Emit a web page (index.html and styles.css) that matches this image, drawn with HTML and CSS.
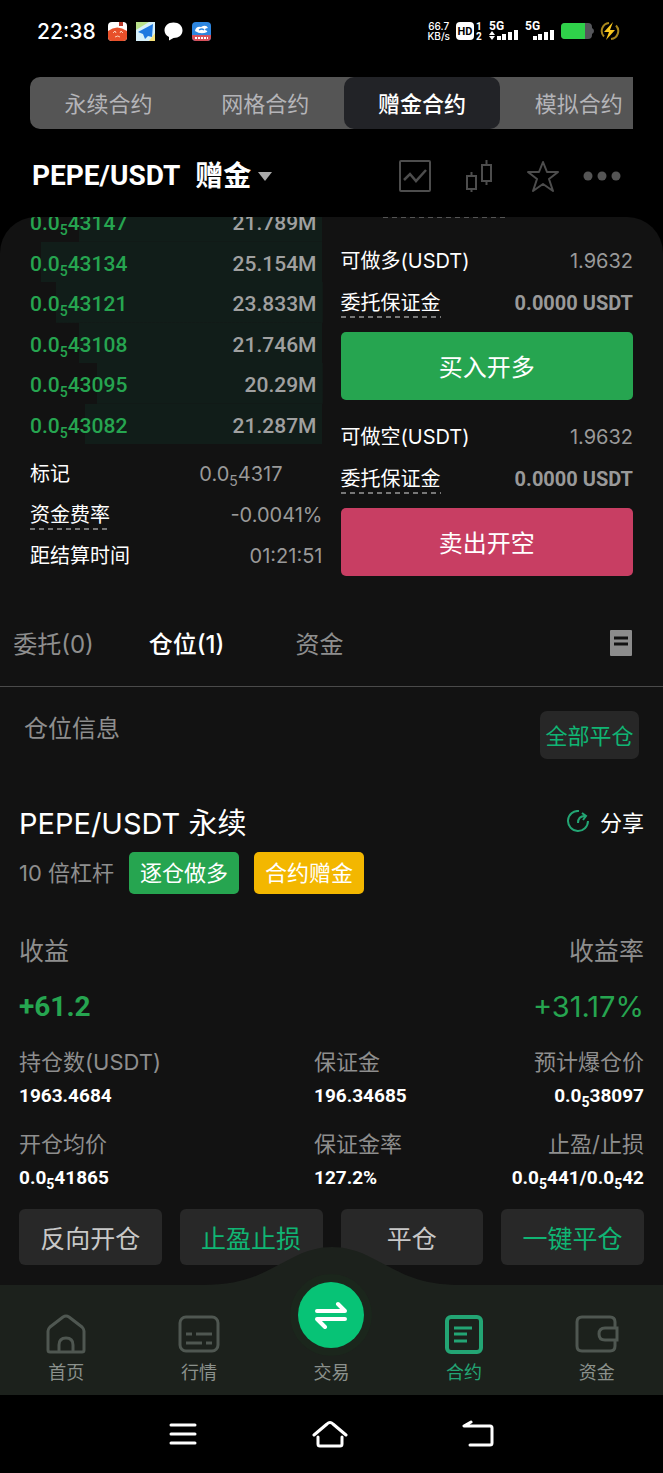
FILE: index.html
```html
<!DOCTYPE html>
<html lang="zh-CN">
<head>
    <meta charset="UTF-8">
    <meta name="viewport" content="width=device-width, initial-scale=1.0">
    <title>PEPE/USDT 赠金合约</title>
    <link rel="stylesheet" href="styles.css">
</head>
<body>
    <div class="status-bar">
        <span class="clock">22:38</span>
        <div class="notifications">
            <svg width="19" height="19" viewBox="0 0 19 19">
                <rect width="19" height="19" rx="4" fill="#fff"/>
                <path d="M0 9Q9 2 19 9V15Q19 19 15 19H4Q0 19 0 15Z" fill="#e8502a"/>
                <path d="M11 0h4v4h-4z" fill="#b8392a"/>
                <path d="M5 11l2-2 1 2M12 11l1-2 2 2M7 15q3-2 5 0" stroke="#fbd0b8" stroke-width="1" fill="none"/>
            </svg>
            <svg width="19" height="19" viewBox="0 0 19 19">
                <rect width="19" height="19" fill="#d6f0fa"/>
                <path d="M0 0h13L0 8z" fill="#b9e08a"/>
                <path d="M13 19h6v-8z" fill="#f6e27a"/>
                <path d="M17 2L2 10l5 2 2 5 3-3 4 1z" fill="#1e78e0"/>
            </svg>
            <svg width="19" height="19" viewBox="0 0 19 19">
                <path d="M9.500 0.500C15 0.500 18.500 4 18.500 8.500S15 16 9.500 16L5 18.500V15C2 13.500 0.500 11 0.500 8.500 0.500 4 4 0.500 9.500 0.500Z" fill="#fff"/>
            </svg>
            <svg width="19" height="19" viewBox="0 0 19 19">
                <rect width="19" height="19" rx="4" fill="#2d86e0"/>
                <path d="M0 13h19v2q0 4-4 4H4q-4 0-4-4z" fill="#d8505a"/>
                <path d="M3 9Q4 4 9 5q5-3 7 1-3 0-3 2 3 1 2 2-6 3-12-1z" fill="#fff"/>
                <path d="M7 8q3-2 5 0" stroke="#2d86e0" stroke-width="1.500" fill="none"/>
                <path d="M3 16h13" stroke="#fff" stroke-width="2" stroke-dasharray="2 1"/>
            </svg>
        </div>
        <div class="signals">
            <span class="speed">66.7<br>KB/s</span>
            <svg width="27" height="20" viewBox="0 0 27 20">
                <rect y="1" width="18" height="18" rx="4" fill="#fff"/>
                <text x="9" y="14" class="hd" text-anchor="middle">HD</text>
                <text x="20" y="9" class="sim">1</text>
                <text x="20" y="19" class="sim">2</text>
            </svg>
            <svg width="30" height="20" viewBox="0 0 30 20">
                <text x="0" y="9" class="net">5G</text>
                <path d="M3 10l3 4H0zM0 15h6l-3 4z" fill="#fff"/>
                <path d="M8 15h4v4H8zM13 13h4v6h-4zM19 11h4v8h-4zM25 9h4v10h-4z" fill="#fff"/>
            </svg>
            <svg width="30" height="20" viewBox="0 0 30 20">
                <text x="0" y="9" class="net">5G</text>
                <path d="M8 15h4v4H8zM13 13h4v6h-4zM19 11h4v8h-4zM25 9h4v10h-4z" fill="#fff"/>
            </svg>
            <svg width="33" height="18" viewBox="0 0 33 18">
                <path d="M4 1H27Q31 1 31 5V6Q33 7 33 9T31 12V13Q31 17 27 17H4Q0 17 0 13V5Q0 1 4 1Z" fill="#55565a"/>
                <path d="M4 1H24V17H4Q0 17 0 13V5Q0 1 4 1Z" fill="#2fd14a"/>
            </svg>
            <svg width="20" height="20" viewBox="0 0 20 20">
                <path d="M9 2A8 8 0 0 0 4 15.500M11 18A8 8 0 0 0 16 4.500" stroke="#a8871c" stroke-width="2" fill="none"/>
                <path d="M13 1L4 11h5l-3 8 9-10h-5z" fill="#fbc91f"/>
            </svg>
        </div>
    </div>

    <nav class="segment">
        <button class="segment-item">永续合约</button>
        <button class="segment-item">网格合约</button>
        <button class="segment-item active">赠金合约</button>
        <button class="segment-item">模拟合约</button>
    </nav>

    <header class="pair-bar">
        <button class="pair"><span class="pair-name">PEPE/USDT</span>赠金<i class="caret"></i></button>
        <div class="pair-tools">
            <button aria-label="图表">
                <svg width="32" height="32" viewBox="0 0 32 32" fill="none" stroke="#4d4d4d" stroke-width="2">
                    <rect x="1" y="1" width="30" height="30" rx="1"/>
                    <path d="M5 20l6-6 6 7L27 10" stroke-width="2.500"/>
                </svg>
            </button>
            <button aria-label="K线">
                <svg width="28" height="34" viewBox="0 0 28 34" fill="none" stroke="#4d4d4d" stroke-width="2">
                    <path d="M2 17h9v13H2zM17 6h9v16h-9zM6.500 13v4M6.500 30v3M21.500 1v5M21.500 22v4"/>
                </svg>
            </button>
            <button aria-label="收藏">
                <svg width="32" height="32" viewBox="0 0 32 32" fill="none" stroke="#4d4d4d" stroke-width="2" stroke-linejoin="round">
                    <path d="M16 2l4 10h11l-9 7 4 12-10-7-10 7 4-12-9-7h11z"/>
                </svg>
            </button>
            <button aria-label="更多">
                <svg width="38" height="10" viewBox="0 0 38 10" fill="#555">
                    <circle cx="5" cy="5" r="4.500"/><circle cx="19" cy="5" r="4.500"/><circle cx="33" cy="5" r="4.500"/>
                </svg>
            </button>
        </div>
    </header>

    <main class="panel">
        <section class="trade">
            <div class="book">
                <div class="book-rows">
                    <div class="book-row" style="--depth: 83%"><span class="price">0.0<sub>5</sub>43147</span><span>21.789M</span></div>
                    <div class="book-row" style="--depth: 96%"><span class="price">0.0<sub>5</sub>43134</span><span>25.154M</span></div>
                    <div class="book-row" style="--depth: 91%"><span class="price">0.0<sub>5</sub>43121</span><span>23.833M</span></div>
                    <div class="book-row" style="--depth: 83%"><span class="price">0.0<sub>5</sub>43108</span><span>21.746M</span></div>
                    <div class="book-row" style="--depth: 77%"><span class="price">0.0<sub>5</sub>43095</span><span>20.29M</span></div>
                    <div class="book-row" style="--depth: 81%"><span class="price">0.0<sub>5</sub>43082</span><span>21.287M</span></div>
                </div>
                <div class="market">
                    <div class="market-row mark"><span class="label">标记</span><span>0.0<sub>5</sub>4317</span></div>
                    <div class="market-row"><span class="label dashed">资金费率</span><span>-0.0041%</span></div>
                    <div class="market-row"><span class="label">距结算时间</span><span>01:21:51</span></div>
                </div>
            </div>
            <div class="order">
                <div class="order-row"><span class="label">可做多(USDT)</span><span>1.9632</span></div>
                <div class="order-row"><span class="label dashed">委托保证金</span><b>0.0000 USDT</b></div>
                <button class="order-btn buy">买入开多</button>
                <div class="order-row"><span class="label">可做空(USDT)</span><span>1.9632</span></div>
                <div class="order-row"><span class="label dashed">委托保证金</span><b>0.0000 USDT</b></div>
                <button class="order-btn sell">卖出开空</button>
            </div>
        </section>

        <nav class="tabs">
            <button class="tab">委托(0)</button>
            <button class="tab active">仓位(1)</button>
            <button class="tab">资金</button>
            <button class="history" aria-label="历史记录">
                <svg width="22" height="26" viewBox="0 0 22 26">
                    <rect width="22" height="26" rx="1" fill="#8c8c8c"/>
                    <path d="M4 8h14M4 14h14" stroke="#121212" stroke-width="3"/>
                </svg>
            </button>
        </nav>

        <div class="position-bar">
            <h2>仓位信息</h2>
            <button class="close-all">全部平仓</button>
        </div>

        <article class="position">
            <div class="position-head">
                <h3>PEPE/USDT 永续</h3>
                <button class="share">
                    <svg width="22" height="22" viewBox="0 0 22 22" fill="none" stroke="#23a574" stroke-width="2">
                        <path d="M12 1A10 10 0 1 0 21 11"/>
                        <path d="M11 13Q11 6 18 6M15 3l4 3-3 4"/>
                    </svg>
                    分享
                </button>
            </div>
            <div class="tags">
                <span class="lever">10 倍杠杆</span>
                <span class="tag green">逐仓做多</span>
                <span class="tag yellow">合约赠金</span>
            </div>
            <div class="profit">
                <span>收益</span><span>收益率</span>
                <strong>+61.2</strong><em>+31.17%</em>
            </div>
            <dl class="details">
                <div><dt>持仓数(USDT)</dt><dd>1963.4684</dd></div>
                <div><dt>保证金</dt><dd>196.34685</dd></div>
                <div><dt>预计爆仓价</dt><dd>0.0<sub>5</sub>38097</dd></div>
                <div><dt>开仓均价</dt><dd>0.0<sub>5</sub>41865</dd></div>
                <div><dt>保证金率</dt><dd>127.2%</dd></div>
                <div><dt>止盈/止损</dt><dd>0.0<sub>5</sub>441/0.0<sub>5</sub>42</dd></div>
            </dl>
            <div class="actions">
                <button>反向开仓</button>
                <button class="accent">止盈止损</button>
                <button>平仓</button>
                <button class="accent">一键平仓</button>
            </div>
        </article>
    </main>

    <nav class="tabbar">
        <svg class="hump" width="260" height="38" viewBox="0 0 260 38">
            <path d="M0 38C45 38 60 26 88 12 104 3 118 0 130 0S156 3 172 12C200 26 215 38 260 38Z" fill="#1c211c"/>
        </svg>
        <a href="#" class="tabbar-item">
            <svg width="40" height="40" viewBox="0 0 40 40" fill="none" stroke="#4f5751" stroke-width="3" stroke-linejoin="round">
                <path d="M2 17Q2 15 4 13L17 3Q20 1 23 3L36 13Q38 15 38 17V36Q38 38 36 38H4Q2 38 2 36Z"/>
                <path d="M13 38V31Q13 24 20 24T27 31V38"/>
            </svg>
            首页
        </a>
        <a href="#" class="tabbar-item">
            <svg width="42" height="40" viewBox="0 0 42 40" fill="none" stroke="#4f5751" stroke-width="3">
                <rect x="2" y="3" width="38" height="34" rx="6"/>
                <path d="M8 20h6M18 20h16M8 29h16M28 29h6"/>
            </svg>
            行情
        </a>
        <a href="#" class="tabbar-item">
            <span class="trade-btn">
                <svg width="34" height="28" viewBox="0 0 34 28" fill="none" stroke="#fff" stroke-width="4" stroke-linecap="round" stroke-linejoin="round">
                    <path d="M3 10H31L24 3M31 18H3L11 26"/>
                </svg>
            </span>
            交易
        </a>
        <a href="#" class="tabbar-item active">
            <svg width="40" height="40" viewBox="0 0 40 40" fill="none" stroke="#23a574" stroke-width="4">
                <rect x="3" y="3" width="34" height="35" rx="4"/>
                <path d="M10 14h18M10 20h13M10 27h13" stroke-width="3"/>
            </svg>
            合约
        </a>
        <a href="#" class="tabbar-item">
            <svg width="44" height="40" viewBox="0 0 44 40" fill="none" stroke="#4f5751" stroke-width="3">
                <path d="M40 14V8Q40 3 35 3H7Q2 3 2 8V32Q2 37 7 37H35Q40 37 40 32V26"/>
                <path d="M42 14H30Q24 14 24 20T30 26H42Z"/>
            </svg>
            资金
        </a>
    </nav>

    <div class="system-nav">
        <button aria-label="最近任务">
            <svg width="28" height="24" viewBox="0 0 28 24" stroke="#fff" stroke-width="3" stroke-linecap="round">
                <path d="M2 3h24M2 12h24M2 21h24"/>
            </svg>
        </button>
        <button aria-label="主屏幕">
            <svg width="36" height="28" viewBox="0 0 36 28" fill="none" stroke="#fff" stroke-width="3" stroke-linecap="round" stroke-linejoin="round">
                <path d="M2 15L15 4Q18 1 21 4L34 15M6 17V24Q6 26 8 26H28Q30 26 30 24V17"/>
            </svg>
        </button>
        <button aria-label="返回">
            <svg width="32" height="28" viewBox="0 0 32 28" fill="none" stroke="#fff" stroke-width="3" stroke-linecap="round" stroke-linejoin="round">
                <path d="M9 2L2 6H28Q30 6 30 8V23Q30 25 28 25H8"/>
            </svg>
        </button>
    </div>
</body>
</html>
```
FILE: styles.css
```css
* {
    box-sizing: border-box;
}
body {
    margin: 0;
    min-height: 100vh;
    display: flex;
    flex-direction: column;
    background-color: #000;
    color: #fff;
    font-family: Inter, "Noto Sans CJK SC", sans-serif;
    font-size: 20px;
}
button {
    padding: 0;
    border: none;
    background: none;
    color: inherit;
    font: inherit;
    white-space: nowrap;
    cursor: pointer;
}
svg {
    display: block;
    flex: none;
}
a {
    color: inherit;
    text-decoration: none;
}
h2, h3, dl, dd {
    margin: 0;
    font-weight: 400;
}
sub {
    font-size: 14px;
    line-height: 0;
    vertical-align: -5px;
}

/* phone status bar */
.status-bar {
    display: flex;
    align-items: center;
    height: 62px;
    margin-bottom: 15px;
    padding: 0 43px 0 37px;
}
.clock {
    font-size: 21px;
    font-weight: 500;
}
.notifications {
    display: flex;
    gap: 9px;
    margin-left: 12px;
}
.signals {
    display: flex;
    align-items: center;
    gap: 6px;
    margin-left: auto;
}
.speed {
    font-size: 10px;
    font-weight: 500;
    line-height: 10px;
    text-align: center;
}
.hd {
    font: 700 11px Roboto, sans-serif;
    fill: #000;
}
.sim {
    font: 700 10px Roboto, sans-serif;
    fill: #fff;
}
.net {
    font: 700 12px Roboto, sans-serif;
    fill: #fff;
}

/* contract type switch */
.segment {
    display: flex;
    height: 52px;
    margin: 0 30px;
    border-radius: 10px 0 0 10px;
    background-color: #555;
    overflow: hidden;
}
.segment-item {
    flex: 0 0 26%;
    padding-bottom: 2px;
    color: #b4b4b8;
    font-size: 22px;
}
.segment-item.active {
    border-radius: 10px;
    background-color: #222327;
    color: #fff;
    font-weight: 500;
}

.pair-bar {
    display: flex;
    align-items: center;
    justify-content: space-between;
    height: 88px;
    padding: 6px 42px 0 32px;
}
.pair {
    display: flex;
    align-items: center;
    font-size: 28px;
    font-weight: 700;
    line-height: 40px;
}
.pair-name {
    margin-right: 15px;
    font-family: Roboto, sans-serif;
}
.caret {
    margin-left: 7px;
    border: 7px solid transparent;
    border-top: 9px solid #aaa;
    border-bottom: none;
}
.pair-tools {
    display: flex;
    align-items: center;
}
.pair-tools button {
    margin-left: 34px;
}
.pair-tools button:last-child {
    margin-left: 24px;
}

.panel {
    flex: 1;
    border-radius: 36px 36px 0 0;
    background-color: #121212;
    overflow: hidden;
}
.trade {
    display: grid;
    grid-template-columns: 1fr 1fr;
    gap: 18px;
    padding: 0 30px;
}

/* order book, scrolled under the header */
.book-rows {
    display: grid;
    grid-template-rows: repeat(6, 1fr);
    height: 243px;
    margin-top: -16px;
    font-family: Roboto, sans-serif;
    font-size: 21px;
    font-weight: 500;
    color: #a0a0a0;
}
.book-row {
    display: flex;
    align-items: center;
    justify-content: space-between;
    padding-right: 6px;
    padding-top: 4px;
    background: linear-gradient(#111d19, #111d19) right / var(--depth) 100% no-repeat;
}
.price {
    color: #26a550;
}
.market {
    margin-top: 9px;
    color: #999;
}
.market-row, .order-row {
    display: flex;
    align-items: center;
    justify-content: space-between;
    height: 41px;
}
.market-row.mark {
    padding-right: 40px;
}
.label {
    color: #fff;
    line-height: 30px;
}
.dashed {
    background: repeating-linear-gradient(90deg, #777 0 5px, transparent 5px 9px) bottom / 100% 2px no-repeat;
}
.order {
    padding-top: 23px;
    background: repeating-linear-gradient(90deg, #555 0 5px, transparent 5px 9px) 42px 0 / 122px 1px no-repeat;
}
.order-row {
    height: 42px;
    color: #999;
}
.order-row b {
    font-family: Roboto, sans-serif;
}
.order-btn {
    display: block;
    width: 100%;
    height: 68px;
    margin: 8px 0 16px;
    padding-bottom: 2px;
    border-radius: 5px;
    font-size: 24px;
}
.buy {
    background-color: #26a550;
}
.sell {
    margin-bottom: 0;
    background-color: #c83e63;
}

.tabs {
    display: flex;
    align-items: center;
    height: 86px;
    margin-top: 25px;
    padding-right: 31px;
    padding-bottom: 2px;
    border-bottom: 1px solid #4a4a4a;
}
.tab {
    width: 133px;
    color: #8e8e8e;
    font-size: 24px;
}
.tab:first-child {
    margin-left: -13px;
}
.tab.active {
    color: #fff;
    font-weight: 500;
}
.history {
    margin-left: auto;
}

.position-bar {
    display: flex;
    justify-content: space-between;
    padding: 24px 24px 0;
}
.position-bar h2 {
    color: #8e8e8e;
    font-size: 24px;
    line-height: 36px;
}
.close-all {
    width: 99px;
    height: 48px;
    padding-bottom: 2px;
    border-radius: 7px;
    background-color: #272727;
    color: #10b574;
    font-size: 22px;
}

.position {
    padding: 41px 19px 18px;
}
.position-head {
    display: flex;
    align-items: center;
    justify-content: space-between;
    height: 44px;
    padding-bottom: 2px;
}
.position-head h3 {
    font-size: 29px;
}
.share {
    display: flex;
    align-items: center;
    gap: 11px;
    font-size: 22px;
}
.tags {
    display: flex;
    align-items: center;
    gap: 15px;
    margin-top: 8px;
    font-size: 22px;
    line-height: 42px;
}
.lever {
    color: #8e8e8e;
}
.tag {
    padding: 0 11px;
    border-radius: 5px;
}
.green {
    background-color: #26a550;
}
.yellow {
    background-color: #f3b700;
}
.profit {
    display: grid;
    grid-template-columns: 1fr auto;
    align-items: center;
    margin-top: 29px;
    color: #8e8e8e;
    font-size: 25px;
    line-height: 56px;
}
.profit span:nth-child(2) {
    text-align: right;
}
.profit strong, .profit em {
    color: #26a550;
    font-size: 28px;
    font-style: normal;
}
.profit em {
    font-size: 29px;
}
.profit strong {
    font-family: Roboto, sans-serif;
}
.details {
    display: grid;
    grid-template-columns: 295px 1fr auto;
    row-gap: 14px;
    margin-top: 10px;
}
.details div:nth-child(3n) {
    text-align: right;
}
.details dt {
    color: #8e8e8e;
    font-size: 22px;
    line-height: 34px;
}
.details dd {
    font: 700 19px/34px Roboto, sans-serif;
}
.actions {
    display: grid;
    grid-template-columns: repeat(4, 1fr);
    gap: 18px;
    margin-top: 14px;
}
.actions button {
    height: 56px;
    border-radius: 6px;
    background-color: #282828;
    color: #c8c8c8;
    font-size: 25px;
}
.actions .accent {
    color: #10b574;
}

/* bottom navigation */
.tabbar {
    position: relative;
    display: grid;
    grid-template-columns: repeat(5, 1fr);
    height: 110px;
    background-color: #1c211c;
}
.hump {
    position: absolute;
    bottom: 100%;
    left: 50%;
    margin-left: -130px;
}
.tabbar-item {
    position: relative;
    display: flex;
    flex-direction: column;
    align-items: center;
    justify-content: flex-end;
    gap: 6px;
    padding-bottom: 9px;
    color: #8b918c;
    font-size: 18px;
    line-height: 26px;
}
.tabbar-item.active {
    color: #23a574;
}
.trade-btn {
    position: absolute;
    top: -3px;
    display: grid;
    place-items: center;
    width: 66px;
    height: 66px;
    border-radius: 50%;
    background-color: #07c376;
    box-shadow: 0 0 0 8px #1b261c;
}

.system-nav {
    display: flex;
    align-items: center;
    justify-content: space-evenly;
    height: 78px;
    padding: 0 55px;
}
```
